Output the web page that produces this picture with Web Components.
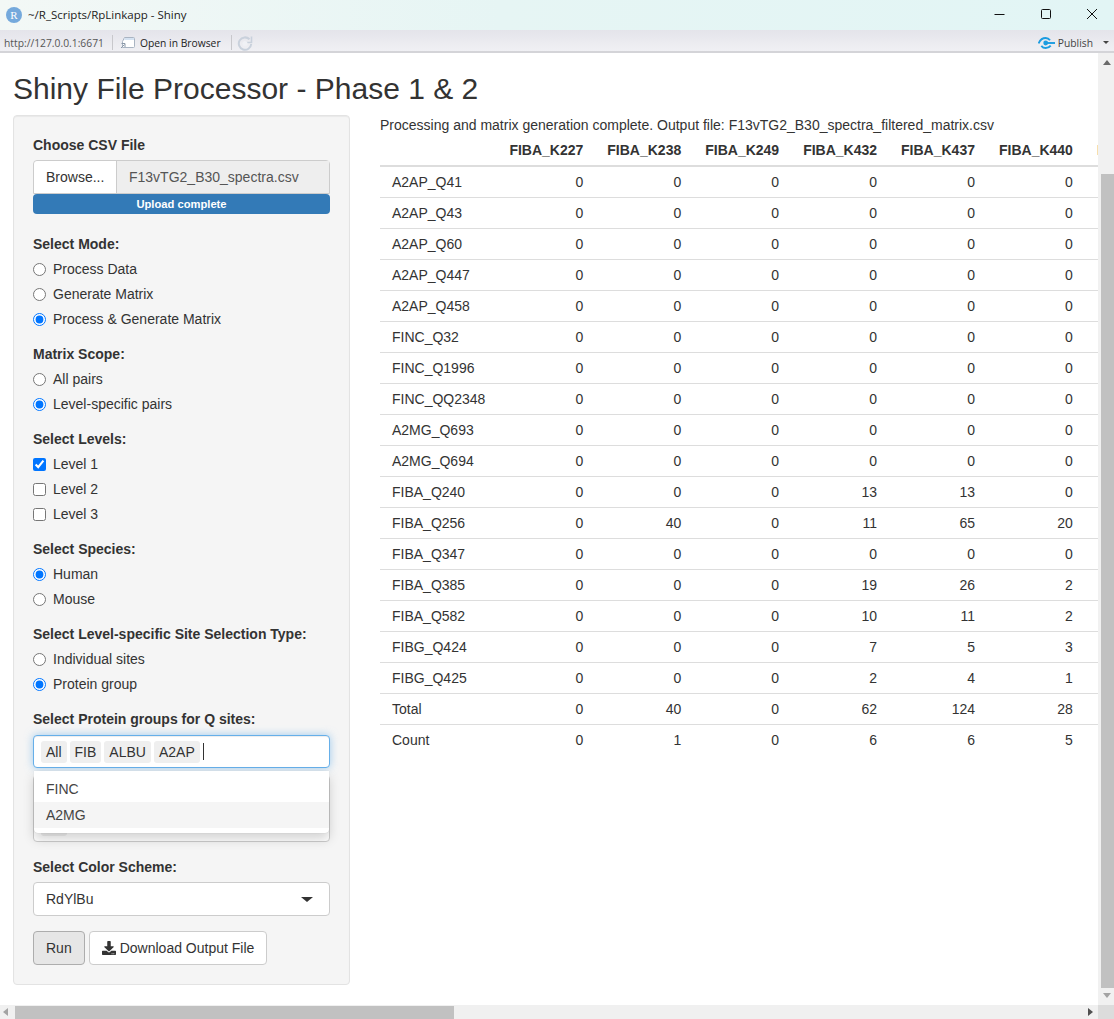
<!DOCTYPE html>
<html>
<head>
<meta charset="utf-8">
<title>Shiny File Processor</title>
<style>
    html, body { margin: 0; height: 100%; overflow: hidden; background: #fff; }
    body { font-family: "Liberation Sans", Arial, sans-serif; font-size: 14px; line-height: 20px; color: #333; }
</style>
</head>
<body>
<shiny-window>
    <shiny-sidebar slot="side">
        <file-input label="Choose CSV File" button="Browse..." file="F13vTG2_B30_spectra.csv" status="Upload complete"></file-input>
        <choice-group label="Select Mode:" type="radio" options="Process Data|Generate Matrix|Process &amp; Generate Matrix" checked="2"></choice-group>
        <choice-group label="Matrix Scope:" type="radio" options="All pairs|Level-specific pairs" checked="1"></choice-group>
        <choice-group label="Select Levels:" type="checkbox" options="Level 1|Level 2|Level 3" checked="0"></choice-group>
        <choice-group label="Select Species:" type="radio" options="Human|Mouse" checked="0"></choice-group>
        <choice-group label="Select Level-specific Site Selection Type:" type="radio" options="Individual sites|Protein group" checked="1"></choice-group>
        <select-multi label="Select Protein groups for Q sites:" chips="All|FIB|ALBU|A2AP" options="FINC|A2MG" active="1"></select-multi>
        <select-single label="Select Color Scheme:" value="RdYlBu"></select-single>
        <action-row></action-row>
    </shiny-sidebar>
    <matrix-table slot="main"></matrix-table>
</shiny-window>

<script>
// barra de titulo, barra de herramientas y scrollbars del visor
class ShinyWindow extends HTMLElement {
    constructor() {
        super();
        this.attachShadow({mode: 'open'});
        this.shadowRoot.innerHTML = `
            <style>
                :host { display: grid; grid-template-rows: 30px 23px 1fr 14px; grid-template-columns: 1fr 16px; height: 1019px; width: 1114px; overflow: hidden; }
                .title { grid-column: 1 / 3; display: flex; align-items: center; background: linear-gradient(90deg, #f3f8f6 0%, #e6f5f4 45%, #e2f5f5 100%); font: 11.5px/16px "Open Sans", sans-serif; color: #222; }
                .logo { margin: 0 6px 0 6px; flex: none; }
                .title span { flex: 1; }
                .win { display: flex; margin-right: -1px; }
                .win svg { display: block; width: 46px; height: 30px; }
                .tools { grid-column: 1 / 3; display: flex; align-items: center; background: linear-gradient(#e4e4ea, #f0f0f4); border-bottom: 2px solid #d4d4d8; box-sizing: border-box; padding-top: 4px; font: 10.3px/14px "Open Sans", sans-serif; color: #222; }
                .url { margin-left: 4px; color: #555; width: 108px; }
                .sep { width: 1px; height: 15px; background: #c8c8cc; }
                .open { display: flex; align-items: center; gap: 5px; margin-left: 7px; width: 111px; }
                .refresh { margin-left: 5px; }
                .spacer { flex: 1; }
                .publish { display: flex; align-items: center; gap: 3px; color: #444; }
                .caret { width: 0; height: 0; border: 3px solid transparent; border-top: 3px solid #444; border-bottom: 0; margin: 0 5px 0 10px; }
                .page { overflow: hidden; display: block; min-width: 0; min-height: 0; padding: 19px 0 0 13px; }
                h1 { margin: 0 0 10px; font: 500 30px/33px "Liberation Sans", sans-serif; color: #333; white-space: nowrap; }
                .cols { display: flex; gap: 30px; align-items: flex-start; }
                .vbar { background: #f1f1f1; display: flex; flex-direction: column; align-items: center; padding-left: 2px; }
                .up, .down { flex: none; width: 0; height: 0; border: 4px solid transparent; }
                .up { border-bottom: 5px solid #6a6a6a; border-top: 0; margin: 7px 0 109px; }
                .vthumb { width: 13px; height: 814px; background: #c1c1c1; flex: none; }
                .down { border-top: 5px solid #a3a3a3; border-bottom: 0; margin-top: 5px; }
                .hbar { background: #f0f0f0; display: flex; align-items: center; }
                .left, .right { flex: none; width: 0; height: 0; border: 4px solid transparent; }
                .left { border-right: 5px solid #a3a3a3; border-left: 0; margin: 0 7px 0 3px; }
                .hthumb { width: 439px; height: 13px; margin-top: 1px; background: #c1c1c1; }
                .right { border-left: 5px solid #505050; border-right: 0; margin: 0 5px 0 auto; }
                .corner { background: #dcdcdc; }
            </style>
            <div class="title">
                <svg class="logo" width="16" height="16" viewBox="0 0 16 16"><circle cx="8" cy="8" r="8" fill="#75a9dc"/><text x="8" y="12" text-anchor="middle" font-family="Liberation Serif" font-size="11" fill="#fff">R</text></svg>
                <span>~/R_Scripts/RpLinkapp - Shiny</span>
                <div class="win">
                    <svg viewBox="0 0 46 30"><path d="M17.5 14.5h10" stroke="#111" fill="none"/></svg>
                    <svg viewBox="0 0 46 30"><rect x="18.5" y="9.5" width="9" height="9" rx="1" stroke="#111" fill="none"/></svg>
                    <svg viewBox="0 0 46 30"><path d="M18 9l10 10M28 9L18 19" stroke="#111" fill="none"/></svg>
                </div>
            </div>
            <div class="tools">
                <span class="url">http://127.0.0.1:6671</span>
                <i class="sep"></i>
                <span class="open">
                    <svg width="15" height="13" viewBox="0 0 15 13"><path d="M4.500 1.500h9a1 1 0 0 1 1 1v8a1 1 0 0 1-1 1h-11v-6z" fill="#fff" stroke="#a9b4c2"/><path d="M5 2h9v2H4z" fill="#d5e3f2"/><path d="M1 12l3.500-3.500M1.500 7.500h3.500V11" fill="none" stroke="#8b98a8"/></svg>
                    Open in Browser
                </span>
                <i class="sep"></i>
                <svg class="refresh" width="16" height="16" viewBox="0 0 16 16"><path d="M12.500 4.300A6.200 6.200 0 1 0 14.200 9" fill="none" stroke="#c9d1dc" stroke-width="2"/><path d="M7.500 7.500h7V1.500" fill="none" stroke="#c9d1dc" stroke-width="1.600"/><circle cx="8" cy="8.500" r="2.500" fill="#f0f1f5"/></svg>
                <span class="spacer"></span>
                <span class="publish">
                    <svg width="17" height="12" viewBox="0 0 17 12"><path d="M.6 6.500C2 3 4.800 1 7.700 1c1.800 0 3.200.8 4.300 2.300M3.300 8.800C4.500 10.300 6 11 7.700 11c2 0 3.700-.8 5-2.400" fill="none" stroke="#1c9ce0" stroke-width="1.900"/><circle cx="7.700" cy="6" r="2.400" fill="#1c9ce0"/><path d="M8 6h9" stroke="#1c9ce0" stroke-width="1.900"/></svg>
                    Publish
                </span>
                <i class="caret"></i>
            </div>
            <div class="page">
                <h1>Shiny File Processor - Phase 1 &amp; 2</h1>
                <div class="cols">
                    <slot name="side"></slot>
                    <slot name="main"></slot>
                </div>
            </div>
            <div class="vbar"><i class="up"></i><div class="vthumb"></div><i class="down"></i></div>
            <div class="hbar"><i class="left"></i><div class="hthumb"></div><i class="right"></i></div>
            <div class="corner"></div>
        `;
    }
}

class ShinySidebar extends HTMLElement {
    constructor() {
        super();
        this.attachShadow({mode: 'open'});
        this.shadowRoot.innerHTML = `
            <style>
                :host { display: flex; flex-direction: column; gap: 15px; flex: none; box-sizing: border-box; width: 337px; padding: 19px; background: #f5f5f5; border: 1px solid #e3e3e3; border-radius: 4px; box-shadow: inset 0 1px 1px rgba(0,0,0,.05); }
            </style>
            <slot></slot>
        `;
    }
}

class FileInput extends HTMLElement {
    constructor() {
        super();
        this.attachShadow({mode: 'open'});
        this.shadowRoot.innerHTML = `
            <style>
                :host { display: block; padding-bottom: 5px; }
                label { display: block; font-weight: 700; margin-bottom: 5px; }
                .group { display: flex; height: 34px; box-sizing: border-box; border: 1px solid #ccc; border-radius: 4px 4px 0 0; }
                .btn { box-sizing: border-box; width: 83px; background: #fff; border-right: 1px solid #ccc; padding: 6px 12px; border-radius: 4px 0 0 0; }
                .name { flex: 1; background: #eee; padding: 6px 12px; color: #555; white-space: nowrap; overflow: hidden; }
                .bar { height: 20px; background: #337ab7; color: #fff; font-size: 11.2px; font-weight: 700; text-align: center; line-height: 20px; border-radius: 4px; }
            </style>
            <label>${this.getAttribute('label')}</label>
            <div class="group"><div class="btn">${this.getAttribute('button')}</div><div class="name">${this.getAttribute('file')}</div></div>
            <div class="bar">${this.getAttribute('status')}</div>
        `;
    }
}

// grupo de radios o checkboxes, usa los controles nativos
class ChoiceGroup extends HTMLElement {
    constructor() {
        super();
        this.attachShadow({mode: 'open'});
        const type = this.getAttribute('type');
        const checked = this.getAttribute('checked');
        const name = this.getAttribute('label');
        const rows = this.getAttribute('options').split('|').map((text, i) => `
            <label class="opt"><input type="${type}" name="${name}" ${String(i) === checked ? 'checked' : ''}><span>${text.replace('&', '&amp;')}</span></label>
        `).join('');
        this.shadowRoot.innerHTML = `
            <style>
                :host { display: block; }
                .head { font-weight: 700; margin-bottom: 5px; }
                .opt { display: flex; align-items: center; height: 20px; margin-bottom: 5px; }
                .opt:last-child { margin-bottom: 0; }
                input { width: 13px; height: 13px; margin: 0 7px 0 0; flex: none; }
            </style>
            <div class="head">${name}</div>
            ${rows}
        `;
    }
}

class SelectMulti extends HTMLElement {
    constructor() {
        super();
        this.attachShadow({mode: 'open'});
        const chips = this.getAttribute('chips').split('|').map(c => `<span class="chip">${c}</span>`).join('');
        const active = Number(this.getAttribute('active'));
        const items = this.getAttribute('options').split('|').map((o, i) => `<div class="item ${i === active ? 'on' : ''}">${o}</div>`).join('');
        this.shadowRoot.innerHTML = `
            <style>
                :host { display: block; position: relative; }
                .head { font-weight: 700; margin-bottom: 6px; }
                .box { display: flex; align-items: center; box-sizing: border-box; height: 33px; padding: 0 7px; background: #fff; border: 1px solid #66afe9; border-radius: 4px; box-shadow: inset 0 1px 1px rgba(0,0,0,.075), 0 0 8px rgba(102,175,233,.6); }
                .chip { background: #efefef; border-radius: 3px; padding: 0 5px; margin-right: 3px; height: 22px; line-height: 22px; }
                .caret { width: 1px; height: 17px; background: #333; }
                .under { box-sizing: border-box; height: 67px; margin-top: 7px; background: #fff; border: 1px solid #ccc; border-radius: 4px; display: flex; align-items: flex-end; padding: 0 7px 5px; }
                .under i { display: block; width: 26px; height: 22px; background: #efefef; border-radius: 3px; }
                .drop { position: absolute; left: 1px; right: 1px; top: 62px; box-sizing: border-box; padding: 5px 0; background: #fff; border-radius: 0 0 4px 4px; box-shadow: 0 6px 12px rgba(0,0,0,.175), 0 0 1px rgba(0,0,0,.2); }
                .item { height: 26px; line-height: 26px; padding-left: 12px; color: #444; }
                .item.on { background: #f5f5f5; }
            </style>
            <div class="head">${this.getAttribute('label')}</div>
            <div class="box">${chips}<i class="caret"></i></div>
            <div class="under"><i></i></div>
            <div class="drop">${items}</div>
        `;
    }
}

class SelectSingle extends HTMLElement {
    constructor() {
        super();
        this.attachShadow({mode: 'open'});
        this.shadowRoot.innerHTML = `
            <style>
                :host { display: block; }
                .head { font-weight: 700; margin-bottom: 5px; }
                .box { display: flex; align-items: center; justify-content: space-between; box-sizing: border-box; height: 34px; padding: 0 16px 0 12px; background: #fff; border: 1px solid #ccc; border-radius: 4px; color: #333; }
                .arrow { width: 0; height: 0; border: 6px solid transparent; border-top: 5px solid #333; border-bottom: 0; }
            </style>
            <div class="head">${this.getAttribute('label')}</div>
            <div class="box"><span>${this.getAttribute('value')}</span><i class="arrow"></i></div>
        `;
    }
}

class ActionRow extends HTMLElement {
    constructor() {
        super();
        this.attachShadow({mode: 'open'});
        this.shadowRoot.innerHTML = `
            <style>
                :host { display: flex; gap: 4px; }
                button { font: inherit; color: #333; height: 34px; padding: 6px 12px; background: #fff; border: 1px solid #ccc; border-radius: 4px; display: flex; align-items: center; gap: 4px; margin: 0; }
                .run { background: #e6e6e6; border-color: #adadad; }
            </style>
            <button class="run">Run</button>
            <button><svg width="14" height="14" viewBox="0 0 512 512"><path fill="#333" d="M216 0h80c13.300 0 24 10.700 24 24v168h87.700c17.800 0 26.700 21.500 14.100 34.100L269.700 378.300c-7.500 7.500-19.800 7.500-27.300 0L90.100 226.100c-12.600-12.600-3.700-34.100 14.100-34.100H192V24c0-13.300 10.700-24 24-24zm296 376v112c0 13.300-10.700 24-24 24H24c-13.300 0-24-10.700-24-24V376c0-13.300 10.700-24 24-24h146.700l49 49c20.100 20.100 52.500 20.100 72.600 0l49-49H488c13.300 0 24 10.700 24 24zm-124 88c0-11-9-20-20-20s-20 9-20 20 9 20 20 20 20-9 20-20zm64 0c0-11-9-20-20-20s-20 9-20 20 9 20 20 20 20-9 20-20z"/></svg>Download Output File</button>
        `;
    }
}

class MatrixTable extends HTMLElement {
    constructor() {
        super();
        this.attachShadow({mode: 'open'});
        const cols = ['FIBA_K227', 'FIBA_K238', 'FIBA_K249', 'FIBA_K432', 'FIBA_K437', 'FIBA_K440', 'FIBA_K445'];
        const rows = [
            ['A2AP_Q41', 0, 0, 0, 0, 0, 0], ['A2AP_Q43', 0, 0, 0, 0, 0, 0], ['A2AP_Q60', 0, 0, 0, 0, 0, 0],
            ['A2AP_Q447', 0, 0, 0, 0, 0, 0], ['A2AP_Q458', 0, 0, 0, 0, 0, 0], ['FINC_Q32', 0, 0, 0, 0, 0, 0],
            ['FINC_Q1996', 0, 0, 0, 0, 0, 0], ['FINC_QQ2348', 0, 0, 0, 0, 0, 0], ['A2MG_Q693', 0, 0, 0, 0, 0, 0],
            ['A2MG_Q694', 0, 0, 0, 0, 0, 0], ['FIBA_Q240', 0, 0, 0, 13, 13, 0], ['FIBA_Q256', 0, 40, 0, 11, 65, 20],
            ['FIBA_Q347', 0, 0, 0, 0, 0, 0], ['FIBA_Q385', 0, 0, 0, 19, 26, 2], ['FIBA_Q582', 0, 0, 0, 10, 11, 2],
            ['FIBG_Q424', 0, 0, 0, 7, 5, 3], ['FIBG_Q425', 0, 0, 0, 2, 4, 1], ['Total', 0, 40, 0, 62, 124, 28],
            ['Count', 0, 1, 0, 6, 6, 5]
        ];
        const head = cols.map(c => `<th>${c}</th>`).join('');
        const body = rows.map(r => `<tr><td class="name">${r[0]}</td>${r.slice(1).map(v => `<td>${v}</td>`).join('')}<td></td></tr>`).join('');
        this.shadowRoot.innerHTML = `
            <style>
                :host { display: block; flex: none; width: 718px; overflow: hidden; }
                p { margin: 0; white-space: nowrap; }
                table { border-collapse: collapse; white-space: nowrap; }
                th { text-align: right; padding: 5px 12px 5px 12px; font-weight: 700; border-bottom: 2px solid #ddd; }
                td { text-align: right; padding: 5px 12px; border-top: 1px solid #ddd; }
                tbody tr:first-child td { border-top: 0; }
                td.name { text-align: left; }
            </style>
            <p>Processing and matrix generation complete. Output file: F13vTG2_B30_spectra_filtered_matrix.csv</p>
            <table>
                <thead><tr><th></th>${head}</tr></thead>
                <tbody>${body}</tbody>
            </table>
        `;
    }
}

customElements.define('shiny-window', ShinyWindow);
customElements.define('shiny-sidebar', ShinySidebar);
customElements.define('file-input', FileInput);
customElements.define('choice-group', ChoiceGroup);
customElements.define('select-multi', SelectMulti);
customElements.define('select-single', SelectSingle);
customElements.define('action-row', ActionRow);
customElements.define('matrix-table', MatrixTable);
</script>
</body>
</html>
